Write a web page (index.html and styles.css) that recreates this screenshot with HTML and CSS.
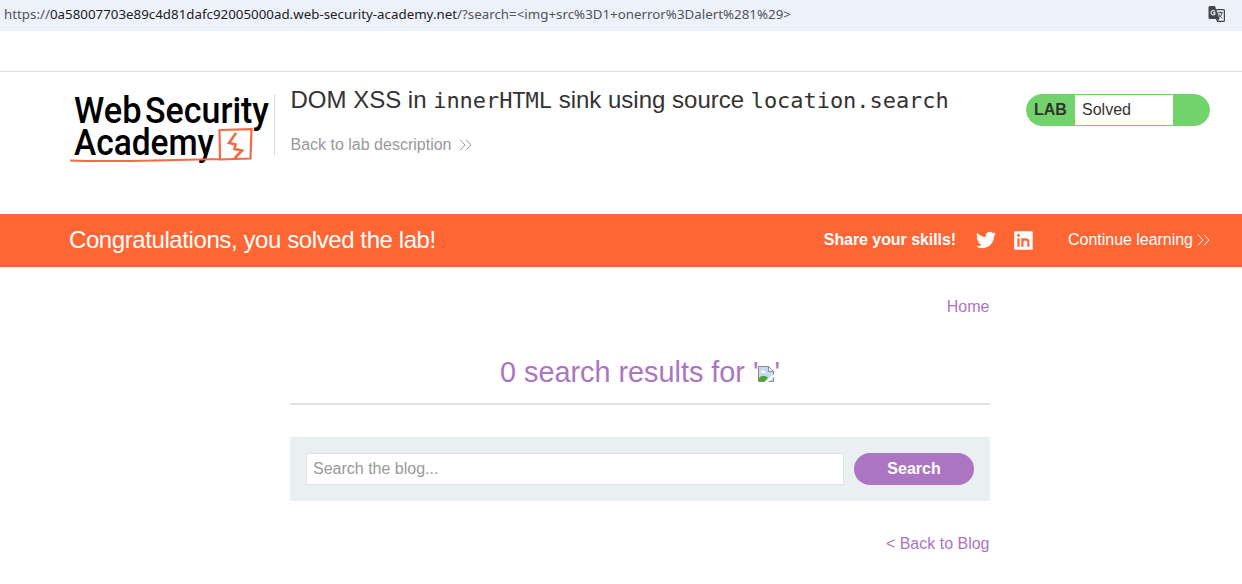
FILE: index.html
```
<!DOCTYPE html>
<html lang="en">
<head>
<meta charset="utf-8">
<title>DOM XSS in innerHTML sink using source location.search</title>
<link rel="stylesheet" href="styles.css">
</head>
<body>
<div class="address-bar">
  <div class="url"><span class="scheme">https://</span><span class="host">0a58007703e89c4d81dafc92005000ad.web-security-academy.net</span><span class="query">/?search=&lt;img+src%3D1+onerror%3Dalert%281%29&gt;</span></div>
  <svg class="translate" width="18" height="18" viewBox="0 0 18 18">
    <path d="M2 1h5l1 3h7.500a1.500 1.500 0 0 1 1.500 1.500v10a1.500 1.500 0 0 1-1.500 1.500H9l-1-3H2a1.500 1.500 0 0 1-1.500-1.500v-10A1.500 1.500 0 0 1 2 1z" fill="#45474a"/>
    <path d="M8.500 5.200h6.700a.6.6 0 0 1 .6.6v9.400a.6.6 0 0 1-.6.6H10l1.500-2z" fill="#edf1fa"/>
    <path d="M6.900 6.300A2.200 2.200 0 1 0 7 9V7.900H5" fill="none" stroke="#edf1fa" stroke-width="1.100"/>
    <path d="M9.500 7.700h5.500M12.200 6.500v1.200M14 7.800c-.4 2-1.600 3.600-3.200 4.700M10.800 9.200c.8 1.700 2 2.900 3.400 3.800" fill="none" stroke="#45474a"/>
  </svg>
</div>
<div class="top-strip"></div>
<header class="lab-header">
  <svg class="logo" width="204" height="76" viewBox="0 0 204 76">
    <g class="logo-text">
      <text x="4" y="32.500" textLength="67.500" lengthAdjust="spacingAndGlyphs">Web</text>
      <text x="75" y="32.500" textLength="124" lengthAdjust="spacingAndGlyphs">Security</text>
      <text x="4" y="65" textLength="140" lengthAdjust="spacingAndGlyphs">Academy</text>
    </g>
    <path d="M0 70.500C30 71.500 58 71 85 70.500L150 69M150 69.500L149.500 40L181.500 39.200L180.500 68.500L149 69.500" fill="none" stroke="#f26b42" stroke-width="2.200"/>
    <path d="M166 43L159 53L165.500 54.500L164.500 59L172 60.500L164.500 68.500" fill="none" stroke="#f26b42" stroke-width="2.600"/>
  </svg>
  <div class="lab-title">
    <h2>DOM XSS in <code>innerHTML</code> sink using source <code>location.search</code></h2>
    <a class="lab-link">Back to lab description
      <svg width="13" height="12" viewBox="0 0 13 12"><path d="M1 .7L6 6L1 11.300M7 .7L12 6L7 11.300" fill="none" stroke="currentColor"/></svg>
    </a>
  </div>
  <div class="lab-status"><b>LAB</b><span>Solved</span></div>
</header>
<section class="banner">
  <p class="congrats">Congratulations, you solved the lab!</p>
  <b class="share">Share your skills!</b>
  <svg class="twitter" width="20" height="20" viewBox="0 0 24 24"><path fill="#fff" d="M23.950 4.570a10 10 0 0 1-2.820.77 4.960 4.960 0 0 0 2.160-2.720c-.95.550-2 .950-3.120 1.180a4.920 4.920 0 0 0-8.390 4.480C7.690 8.090 4.070 6.130 1.640 3.160a4.930 4.930 0 0 0 1.520 6.570 4.900 4.900 0 0 1-2.230-.61v.06a4.920 4.920 0 0 0 3.950 4.830 5 5 0 0 1-2.210.08 4.940 4.940 0 0 0 4.600 3.420A9.870 9.870 0 0 1 0 19.540a13.990 13.990 0 0 0 7.550 2.210c9.050 0 14-7.500 14-13.980 0-.21 0-.42-.02-.63a9.940 9.940 0 0 0 2.460-2.550z"/></svg>
  <svg class="linkedin" width="19" height="19" viewBox="0 0 19 19"><rect width="18.500" height="18.500" x=".2" y=".2" rx="1" fill="#fff"/><path d="M4.500 7.200v8.500M8.400 15.700V7.200M8.400 11c0-3.500 6-3.700 6 .3v4.400" fill="none" stroke="#ff6633" stroke-width="2.200"/><circle cx="4.500" cy="4.300" r="1.500" fill="#ff6633"/></svg>
  <a class="continue">Continue learning <svg width="13" height="12" viewBox="0 0 13 12"><path d="M1 .7L6 6L1 11.300M7 .7L12 6L7 11.300" fill="none" stroke="currentColor"/></svg></a>
</section>
<main class="blog">
  <nav class="home"><a>Home</a></nav>
  <h1>0 search results for '<svg class="broken" width="16" height="16" viewBox="0 0 16 16"><path d="M.5.5h10l5 5v10H.5z" fill="#c6d9f4" stroke="#8b8b8b"/><path d="M3 6c0-2 2.500-2.500 3-1 1.500 0 2 1.500 1 2H3.500z" fill="#fff"/><path d="M1 15v-3c3-3 6-3 9 0l-3 3z" fill="#4aa52d"/><path d="M10.500.5v5h5z" fill="#fff" stroke="#8b8b8b"/><path d="M6.500 16L16 8v3l-6 5z" fill="#fff"/></svg>'</h1>
  <form class="search">
    <input type="text" placeholder="Search the blog...">
    <button type="button">Search</button>
  </form>
  <div class="back"><a>&lt; Back to Blog</a></div>
</main>
</body>
</html>
```
FILE: styles.css
```
* { box-sizing: border-box; }
body { margin: 0; height: 584px; overflow: hidden; background: #fff; color: #333332; font: 16px/20px "Liberation Sans", Arial, sans-serif; }
h1, h2, p { margin: 0; font-weight: 400; }
.address-bar { display: flex; justify-content: space-between; height: 31px; padding: 5px 16px 0 4px; background: #edf1fa; }
.url { font: 13.3px/18px "Noto Sans", sans-serif; letter-spacing: .018px; color: #505357; white-space: nowrap; }
.host { color: #202124; }
.top-strip { height: 41px; border-bottom: 1px solid #dedede; }
.lab-header { display: flex; height: 142px; padding: 18px 32px 0 70px; }
.logo { display: block; overflow: visible; }
.logo-text { font: 500 36.5px Roboto, sans-serif; fill: #000; }
.lab-title { flex: 1; height: 66px; margin-top: 4px; }
.lab-title::before { content: ""; float: left; width: 1px; height: 62px; margin-right: 15.5px; background: #dedede; }
.lab-title h2 { margin-top: -8px; font-size: 24px; line-height: 28px; white-space: nowrap; }
.lab-title code { font: 22px/28px "DejaVu Sans Mono", monospace; letter-spacing: -.05px; }
.lab-link { display: flex; align-items: center; gap: 8px; margin-top: 20px; color: #999; }
.lab-status { display: flex; width: 184px; height: 32px; margin-top: 4px; border: 1px solid #72d36d; border-radius: 16px; background: #72d36d; line-height: 30px; overflow: hidden; }
.lab-status b { width: 48px; padding-left: 7px; }
.lab-status span { width: 98px; padding-left: 7px; background: #fff; }
.banner { display: flex; align-items: center; height: 53px; padding: 0 32px 2px 69px; background: #ff6633; color: #fff; }
.congrats { flex: 1; font-size: 24px; line-height: 28px; letter-spacing: -.41px; }
.share { letter-spacing: -.06px; }
.twitter { margin: 1px 0 0 19.500px; }
.linkedin { margin: 1px 35px 0 18.500px; }
.continue { display: flex; align-items: center; gap: 4px; letter-spacing: -.03px; }
.blog { width: 700px; margin: 30px 0 0 290px; color: #ac75c2; }
.home, .back { padding-right: .5px; text-align: right; }
.blog h1 { height: 88px; padding-top: 38px; border-bottom: 2px solid #e3e3e3; text-align: center; font-size: 28.8px; line-height: 34px; }
.broken { vertical-align: 0; }
.search { display: flex; gap: 10px; height: 64px; margin: 32px 0 33px; padding: 16px; background: #eaeff2; }
.search input { flex: 1; min-width: 0; height: 32px; padding: 0 6px; border: 1px solid #dfe4e6; font: inherit; }
.search input::placeholder { color: #999; }
.search button { width: 120px; height: 32px; padding: 0; border: 0; border-radius: 16px; background: #ac75c2; color: #fff; font: bold 16px/32px "Liberation Sans", Arial, sans-serif; }
```
